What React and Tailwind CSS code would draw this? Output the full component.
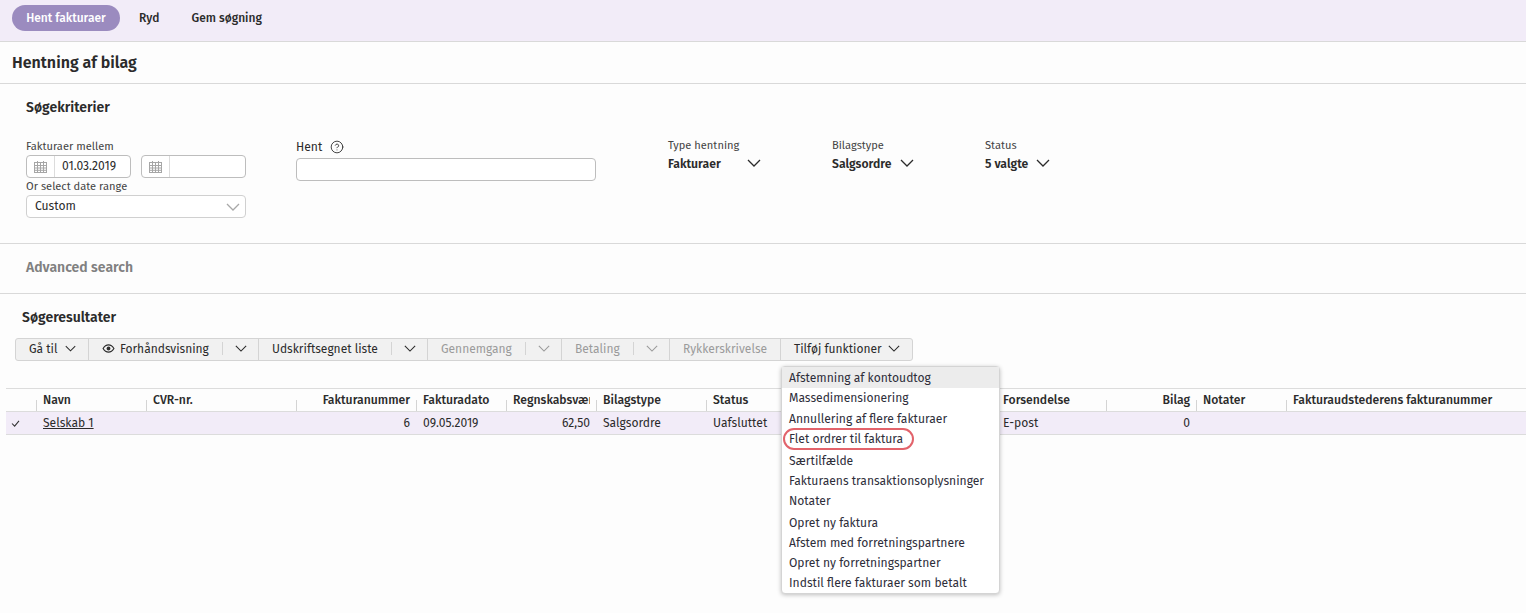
import React from 'react'
import { CircleHelp } from 'lucide-react'

const Chevron = ({ className = 'w-[14px] h-[8px]' }) => (
  <svg viewBox="0 0 14 8" className={className} fill="none" stroke="currentColor" strokeWidth="1.3">
    <polyline points="1,1 7,7 13,1" />
  </svg>
)

const Calendar = () => (
  <svg viewBox="0 0 13 12" className="w-[13px] h-[12px] text-[#a6a6a6]" fill="none" stroke="currentColor" strokeWidth="1">
    <rect x="0.5" y="1.5" width="12" height="10" />
    <path d="M0.5 4.5h12M0.5 7h12M0.5 9.300h12M3.500 1.500v10M6.500 1.500v10M9.500 1.500v10M3.500 0v2M9.500 0v2" />
  </svg>
)

const Eye = () => (
  <svg viewBox="0 0 14 10" className="w-[13px] h-[9px]" fill="none" stroke="currentColor" strokeWidth="1.300">
    <path d="M1 5c1.500-2.500 3.500-4 6-4s4.500 1.500 6 4c-1.500 2.500-3.500 4-6 4s-4.500-1.500-6-4z" />
    <circle cx="7" cy="5" r="1.500" fill="currentColor" />
  </svg>
)

const DateField = ({ value }) => (
  <div className="w-[105px] h-[23px] flex items-center border border-[#bdbdbd] rounded-[4px] bg-white">
    <div className="w-[28px] h-full flex items-center justify-center border-r border-[#dcdcdc]">
      <Calendar />
    </div>
    <span className="pl-[7px]">{value}</span>
  </div>
)

const Filter = ({ label, value, className, gap }) => (
  <div className={className}>
    <div className="text-[11.100px] leading-[14px] text-[#444]">{label}</div>
    <div className={`flex items-center mt-[2px] font-semibold text-[12.200px] leading-[18px] ${gap}`}>
      {value}
      <Chevron className="w-[14px] h-[8px] -mt-[3px]" />
    </div>
  </div>
)

const ToolButton = ({ children, off, split, w }) => (
  <div className={`h-full flex items-center pb-[2px] border-r border-[#d4d4d4] last:border-r-0 ${off ? 'text-[#9b9b9b]' : 'text-[#2b2b2b]'} ${w}`}>
    {children}
    {split && (
      <div className="ml-auto w-[36px] flex justify-center border-l border-[#d4d4d4] h-[13px] items-center">
        <Chevron className={`w-[12px] h-[7px] ${off ? 'text-[#9b9b9b]' : 'text-[#2b2b2b]'}`} />
      </div>
    )}
  </div>
)

const columns = [
  { w: 'w-[30px]', head: '', cell: <svg viewBox="0 0 10 8" className="w-[9px] h-[7px]" fill="none" stroke="#333" strokeWidth="1.200"><polyline points="1,4 4,7 9,1" /></svg>, cls: 'pl-[5px]' },
  { w: 'w-[110px]', head: 'Navn', cell: <span className="underline">Selskab 1</span>, cls: 'pl-[7px]' },
  { w: 'w-[150px]', head: 'CVR-nr.', cell: '', cls: 'pl-[7px]' },
  { w: 'w-[120px]', head: 'Fakturanummer', cell: '6', cls: 'pr-[6px] justify-end' },
  { w: 'w-[90px]', head: 'Fakturadato', cell: '09.05.2019', cls: 'pl-[7px]' },
  { w: 'w-[90px]', head: 'Regnskabsværdi', cell: '62,50', cls: 'pl-[7px] pr-[6px] justify-end', clip: true },
  { w: 'w-[110px]', head: 'Bilagstype', cell: 'Salgsordre', cls: 'pl-[7px]' },
  { w: 'w-[290px]', head: 'Status', cell: 'Uafsluttet', cls: 'pl-[7px]' },
  { w: 'w-[110px]', head: 'Forsendelse', cell: 'E-post', cls: 'pl-[7px]' },
  { w: 'w-[90px]', head: 'Bilag', cell: '0', cls: 'pr-[6px] justify-end' },
  { w: 'w-[90px]', head: 'Notater', cell: '', cls: 'pl-[7px]' },
  { w: 'flex-1', head: 'Fakturaudstederens fakturanummer', cell: '', cls: 'pl-[7px]' },
]

const menu = [
  ['Afstemning af kontoudtog', 'h-[21px] pt-px bg-[#ececec]'],
  ['Massedimensionering', 'h-[20px]'],
  ['Annullering af flere fakturaer', 'h-[21px] pt-[2px]'],
  ['Flet ordrer til faktura', 'h-[21px]'],
  ['Særtilfælde', 'h-[21px] pt-[2px]'],
  ['Fakturaens transaktionsoplysninger', 'h-[20px]'],
  ['Notater', 'h-[21px]'],
  ['Opret ny faktura', 'h-[21px] pt-[2px]'],
  ['Afstem med forretningspartnere', 'h-[20px]'],
  ['Opret ny forretningspartner', 'h-[20px]'],
  ['Indstil flere fakturaer som betalt', 'h-[20px]'],
]

export default function App() {
  return (
    <div className="relative h-[613px] overflow-hidden bg-[#fdfdfd] text-[#2b2b2b] text-[12.100px] font-['Fira_Sans','Noto_Sans',sans-serif]">
      <div className="h-[42px] bg-[#f2ecf8] border-b border-[#d9d9d9] flex items-start pt-[5px] pl-[12px] font-medium text-[12px]">
        <button className="h-[26px] w-[108px] rounded-full bg-[#9b8bbf] text-white">Hent fakturaer</button>
        <button className="h-[26px] ml-[19px]">Ryd</button>
        <button className="h-[26px] ml-[32px]">Gem søgning</button>
      </div>

      <div className="h-[42px] border-b border-[#d9d9d9] flex items-center pl-[12px] text-[16px] font-semibold">
        Hentning af bilag
      </div>

      <div className="h-[160px] border-b border-[#d9d9d9] pl-[26px] pt-[14px]">
        <h2 className="text-[14px] font-semibold leading-[20px]">Søgekriterier</h2>
        <div className="flex mt-[21px]">
          <div className="w-[270px]">
            <div className="text-[11.100px] leading-[16px] text-[#444]">Fakturaer mellem</div>
            <div className="flex gap-[10px]">
              <DateField value="01.03.2019" />
              <DateField value="" />
            </div>
            <div className="text-[11.100px] leading-[17px] text-[#444]">Or select date range</div>
            <div className="w-[220px] h-[23px] flex items-center justify-between pl-[8px] pr-[5px] border border-[#d0d0d0] rounded-[4px] bg-white">
              Custom
              <Chevron className="w-[14px] h-[8px] text-[#a8a8a8]" />
            </div>
          </div>
          <div className="w-[372px]">
            <div className="flex items-center gap-[8px] h-[16px]">
              Hent
              <CircleHelp size={14} strokeWidth={1.500} />
            </div>
            <div className="w-[300px] h-[23px] mt-[3px] border border-[#bdbdbd] rounded-[4px] bg-white" />
          </div>
          <Filter label="Type hentning" value="Fakturaer" className="w-[164px]" gap="gap-[26px]" />
          <Filter label="Bilagstype" value="Salgsordre" className="w-[153px]" gap="gap-[8px]" />
          <Filter label="Status" value="5 valgte" gap="gap-[8px]" />
        </div>
      </div>

      <div className="h-[50px] border-b border-[#d9d9d9] pl-[26px] pb-[2px] flex items-center text-[14px] font-semibold text-[#808080]">
        Advanced search
      </div>

      <h2 className="ml-[22px] mt-[14px] text-[14px] font-semibold leading-[20px]">Søgeresultater</h2>

      <div className="ml-[15px] mt-[10px] w-[898px] h-[23px] flex bg-[#f1f1f1] border border-[#d4d4d4] rounded-[3px] text-[12px]">
        <ToolButton w="w-[73px] pl-[13px] gap-[7px]">Gå til <Chevron className="w-[11px] h-[7px]" /></ToolButton>
        <ToolButton w="w-[170px] pl-[13px]" split><span className="mr-[5px]"><Eye /></span>Forhåndsvisning</ToolButton>
        <ToolButton w="w-[169px] pl-[13px]" split>Udskriftsegnet liste</ToolButton>
        <ToolButton w="w-[134px] pl-[13px]" off split>Gennemgang</ToolButton>
        <ToolButton w="w-[108px] pl-[13px]" off split>Betaling</ToolButton>
        <ToolButton w="w-[111px] justify-center" off>Rykkerskrivelse</ToolButton>
        <ToolButton w="flex-1 pl-[13px] gap-[6px]">Tilføj funktioner <Chevron className="w-[12px] h-[7px]" /></ToolButton>
      </div>

      <div className="ml-[6px] mt-[27px] border-t border-[#dcdcdc]">
        <div className="flex h-[23px] border-b border-[#dcdcdc] font-medium text-[12.200px]">
          {columns.map((c, i) => (
            <div key={i} className={`${c.w} ${c.cls} relative flex items-center whitespace-nowrap overflow-hidden`}>
              {c.clip ? <span className="w-[77px] overflow-hidden shrink-0">{c.head}</span> : c.head}
              {i > 0 && <div className="absolute left-0 bottom-0 w-px h-[11px] bg-[#d4d4d4]" />}
            </div>
          ))}
        </div>
        <div className="flex h-[23px] bg-[#f2ecf8] border-b border-[#dcdcdc]">
          {columns.map((c, i) => (
            <div key={i} className={`${c.w} ${c.cls} flex items-center whitespace-nowrap`}>{c.cell}</div>
          ))}
        </div>
      </div>

      <div className="absolute left-[781px] top-[366px] w-[219px] bg-white rounded-[4px] border border-[#d4d4d4] shadow-[0_1px_4px_rgba(0,0,0,0.25)]">
        {menu.map(([label, cls]) => (
          <div key={label} className={`${cls} flex items-center pl-[7px] whitespace-nowrap text-[#2e2e3a]`}>{label}</div>
        ))}
      </div>
      <div className="absolute left-[783px] top-[428px] w-[131px] h-[22px] rounded-full border-2 border-[#e2636b]" />
    </div>
  )
}
